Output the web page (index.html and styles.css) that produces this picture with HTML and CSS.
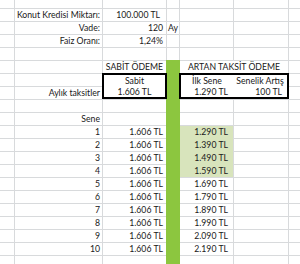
FILE: index.html
```html
<!DOCTYPE html>
<html lang="tr">
<head>
<meta charset="utf-8">
<title>Konut Kredisi</title>
<link rel="stylesheet" href="styles.css">
</head>
<body>
<div class="sheet">
  <!-- R0 -->
  <div></div><div></div><div></div><div></div><div></div><div></div><div></div>
  <!-- R1 -->
  <div></div><div class="r">Konut Kredisi Miktarı:</div><div class="acc">100.000 TL</div><div></div><div></div><div></div><div></div>
  <!-- R2 -->
  <div></div><div class="r">Vade:</div><div class="num">120</div><div class="lft">Ay</div><div></div><div></div><div></div>
  <!-- R3 -->
  <div></div><div class="r">Faiz Oranı:</div><div class="num">1,24%</div><div></div><div></div><div></div><div></div>
  <!-- R4 -->
  <div></div><div></div><div></div><div></div><div></div><div></div><div></div>
  <!-- R5 -->
  <div></div><div></div><div class="ctr">SABİT ÖDEME</div><div class="green"></div><div class="ctr span2">ARTAN TAKSİT ÖDEME</div><div></div>
  <!-- R6 -->
  <div></div><div></div>
  <div class="box box-c"><span class="ctr">Sabit</span><span class="ctr">1.606 TL</span></div>
  <div class="box box-ef"><span class="ctr">İlk Sene</span><span class="ctr">Senelik Artış</span><span class="tl">1.290 TL</span><span class="tl">100 TL</span></div>
  <div></div>
  <!-- R7 -->
  <div></div><div class="r">Aylık taksitler</div><div></div>
  <!-- R8 -->
  <div></div><div></div><div></div><div></div><div></div><div></div>
  <!-- R9 -->
  <div></div><div class="r">Sene</div><div></div><div></div><div></div><div></div>
  <!-- R10 -->
  <div></div><div class="r">1</div><div class="num">1.606 TL</div>
  <div class="fill"><span class="tl">1.290 TL</span><span class="tl">1.390 TL</span><span class="tl">1.490 TL</span><span class="tl">1.590 TL</span></div>
  <div></div><div></div>
  <!-- R11 -->
  <div></div><div class="r">2</div><div class="num">1.606 TL</div><div></div><div></div>
  <!-- R12 -->
  <div></div><div class="r">3</div><div class="num">1.606 TL</div><div></div><div></div>
  <!-- R13 -->
  <div></div><div class="r">4</div><div class="num">1.606 TL</div><div></div><div></div>
  <!-- R14 -->
  <div></div><div class="r">5</div><div class="num">1.606 TL</div><div class="tl">1.690 TL</div><div></div><div></div>
  <div></div><div class="r">6</div><div class="num">1.606 TL</div><div class="tl">1.790 TL</div><div></div><div></div>
  <div></div><div class="r">7</div><div class="num">1.606 TL</div><div class="tl">1.890 TL</div><div></div><div></div>
  <div></div><div class="r">8</div><div class="num">1.606 TL</div><div class="tl">1.990 TL</div><div></div><div></div>
  <div></div><div class="r">9</div><div class="num">1.606 TL</div><div class="tl">2.090 TL</div><div></div><div></div>
  <div></div><div class="r">10</div><div class="num">1.606 TL</div><div class="tl">2.190 TL</div><div></div><div></div>
  <!-- R20 -->
  <div></div><div></div><div></div><div></div><div></div><div></div>
</div>
</body>
</html>
```
FILE: styles.css
```css
html, body {
  margin: 0;
  padding: 0;
  background: #fff;
}
body {
  font-family: Lato, "Liberation Sans", sans-serif;
  font-size: 8.7px;
  color: #202020;
}
.sheet {
  display: grid;
  width: 300px;
  height: 264px;
  grid-template-columns: 14px 87px 63px 12px 53px 54px 11px;
  grid-template-rows: 8px repeat(19, 12px) 8px;
  gap: 1px;
  background: #d8dadc;
  overflow: hidden;
}
.sheet > div {
  background: #fff;
  line-height: 12px;
  white-space: nowrap;
  min-width: 0;
}
.sheet span {
  display: block;
  line-height: 11px;
  white-space: nowrap;
}
.r { text-align: right; padding-right: 2px; }
.num { text-align: right; padding-right: 3px; }
.acc { text-align: right; padding-right: 6px; }
.tl { text-align: right; padding-right: 5px; }
.lft { text-align: left; padding-left: 1px; }
.ctr { text-align: center; }
.span2 { grid-column: span 2; }
.sheet > .green {
  grid-row: span 16;
  margin: -1px -1px 0 -1px;
  background: #8cc63f;
}
.sheet > .box {
  box-sizing: border-box;
  margin: -1px -1px 0 -1px;
  border: 2px solid #000;
  display: grid;
  grid-template-rows: 11px 11px;
}
.box-c { grid-row: span 2; }
.box-ef {
  grid-row: span 2;
  grid-column: span 2;
  grid-template-columns: 52px 1fr;
}
.sheet > .fill {
  grid-row: span 4;
  background: #d8e4bc;
  display: grid;
  grid-template-rows: repeat(4, 12px);
  row-gap: 1px;
}
.sheet > .fill span {
  line-height: 12px;
}
```
